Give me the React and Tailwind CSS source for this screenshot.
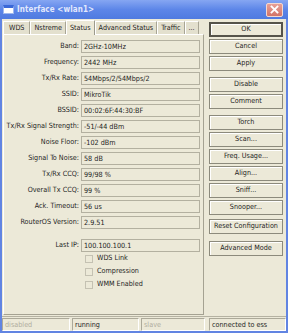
import React from 'react'

const rows = [
  ['Band', '2GHz-10MHz'],
  ['Frequency', '2442 MHz'],
  ['Tx/Rx Rate', '54Mbps/2/54Mbps/2'],
  ['SSID', 'MikroTik'],
  ['BSSID', '00:02:6F:44:30:BF'],
  ['Tx/Rx Signal Strength', '-51/-44 dBm'],
  ['Noise Floor', '-102 dBm'],
  ['Signal To Noise', '58 dB'],
  ['Tx/Rx CCQ', '99/98 %'],
  ['Overall Tx CCQ', '99 %'],
  ['Ack. Timeout', '56 us'],
  ['RouterOS Version', '2.9.51'],
]

const tabs = ['WDS', 'Nstreme', 'Status', 'Advanced Status', 'Traffic', '...']

const buttonGroups = [
  { gap: 'mt-0', items: ['Cancel', 'Apply'] },
  { gap: 'mt-[6px]', items: ['Disable', 'Comment'] },
  { gap: 'mt-[6px]', items: ['Torch', 'Scan...', 'Freq. Usage...', 'Align...', 'Sniff...', 'Snooper...'] },
  { gap: 'mt-[4px]', items: ['Reset Configuration'] },
  { gap: 'mt-[7px]', items: ['Advanced Mode'] },
]

const Field = ({ label, value }) => (
  <div className="flex items-center h-[16px]">
    <div className="w-[75px] text-right whitespace-nowrap">{label}:</div>
    <div className="ml-[2px] w-[119px] h-[13px] border border-[#b3b0a0] bg-[#ece9d8] pl-[2px] leading-[11px] whitespace-nowrap">
      {value}
    </div>
  </div>
)

const Check = ({ label }) => (
  <div className="flex items-center h-[13px] pl-[78px]">
    <div className="w-[8px] h-[8px] border border-[#c4c1b2] bg-[#ece9d8] ml-[3px]" />
    <span className="ml-[4px]">{label}</span>
  </div>
)

const Btn = ({ text, bold }) => (
  <div
    className={`h-[15px] w-[74px] flex items-center justify-center bg-[#ece9d8] shadow-[inset_1px_1px_0_#fff] ${
      bold ? 'border-2 border-[#55534a]' : 'border border-[#8c8a7c]'
    }`}
  >
    {text}
  </div>
)

export default function App() {
  return (
    <div
      className="w-[288px] h-[333px] bg-[#6184e2] flex flex-col text-[7.2px] text-[#1e1e1e] overflow-hidden"
      style={{ fontFamily: '"DejaVu Sans Condensed", "Liberation Sans", Arial, sans-serif' }}
    >
      {/* title bar */}
      <div className="h-[19px] shrink-0 flex items-center px-[3px] bg-gradient-to-b from-[#86a6f2] via-[#5d86e8] to-[#4f7ae0]">
        <div className="w-[11px] h-[9px] bg-white border border-[#9fb8ef] border-t-[3px] border-t-[#3a68d8]" />
        <span className="ml-[3px] text-[8px] font-bold text-[#e3e9fd] tracking-[0.1px]">Interface &lt;wlan1&gt;</span>
        <div className="ml-auto mr-[2px] w-[17px] h-[14px] rounded-[2px] border border-[#f3d8d0] bg-gradient-to-b from-[#e8a096] to-[#d27468] flex items-center justify-center">
          <svg width="9" height="9" viewBox="0 0 9 9">
            <path d="M1.5 1.5 L7.5 7.5 M7.5 1.5 L1.5 7.5" stroke="#fff" strokeWidth="1.8" strokeLinecap="square" />
          </svg>
        </div>
      </div>

      {/* window body */}
      <div className="flex-1 flex flex-col bg-[#ece9d8] mx-[2px]">
        <div className="flex-1 flex">
          {/* left: tabs + panel */}
          <div className="w-[202px] flex flex-col pl-[1px]">
            <div className="h-[15px] flex items-end">
              {tabs.map((t, i) => (
                <div
                  key={t}
                  className={
                    t === 'Status'
                      ? 'h-[15px] px-[3px] flex items-center bg-[#ece9d8] border-t border-l border-r border-white border-r-[#9c9a8c] -mb-[1px] relative z-10'
                      : `h-[13px] ${i === 0 ? 'px-[5px]' : 'px-[3px]'} flex items-center bg-[#e3e0ce] border-t border-l border-white border-r border-r-[#a8a594]`
                  }
                >
                  {t}
                </div>
              ))}
            </div>
            <div className="flex-1 border border-white border-r-[#a5a292] border-b-[#a5a292] pt-[3px] flex flex-col mb-[1px]">
              {rows.map(([l, v]) => (
                <Field key={l} label={l} value={v} />
              ))}
              <div className="mt-[7px]">
                <Field label="Last IP" value="100.100.100.1" />
              </div>
              <div className="-mt-[1px]">
                <Check label="WDS Link" />
                <Check label="Compression" />
                <Check label="WMM Enabled" />
              </div>
            </div>
          </div>

          {/* right: buttons */}
          <div className="flex-1 flex flex-col items-start pl-[5px] pt-[3px]">
            <Btn text="OK" bold />
            {buttonGroups.map((g, i) => (
              <div key={i} className={`flex flex-col gap-[2px] ${i === 0 ? 'mt-[2px]' : g.gap}`}>
                {g.items.map((b) => (
                  <Btn key={b} text={b} />
                ))}
              </div>
            ))}
          </div>
        </div>

        {/* status bar */}
        <div className="h-[15px] shrink-0 flex gap-[2px] border-t border-[#b5b2a2] pt-[1px]">
          <div className="w-[68px] border-t border-l border-[#aca999] border-b border-b-white border-r border-r-white pl-[2px] leading-[12px] text-[#b0ad9e]">disabled</div>
          <div className="w-[67px] border-t border-l border-[#aca999] border-b border-b-white border-r border-r-white pl-[2px] leading-[12px]">running</div>
          <div className="w-[64px] border-t border-l border-[#aca999] border-b border-b-white border-r border-r-white pl-[2px] leading-[12px] text-[#b0ad9e]">slave</div>
          <div className="flex-1 ml-[2px] border-t border-l border-[#aca999] border-b border-b-white border-r border-r-white pl-[2px] leading-[12px]">connected to ess</div>
        </div>
      </div>
      <div className="h-[2px] shrink-0" />
    </div>
  )
}
